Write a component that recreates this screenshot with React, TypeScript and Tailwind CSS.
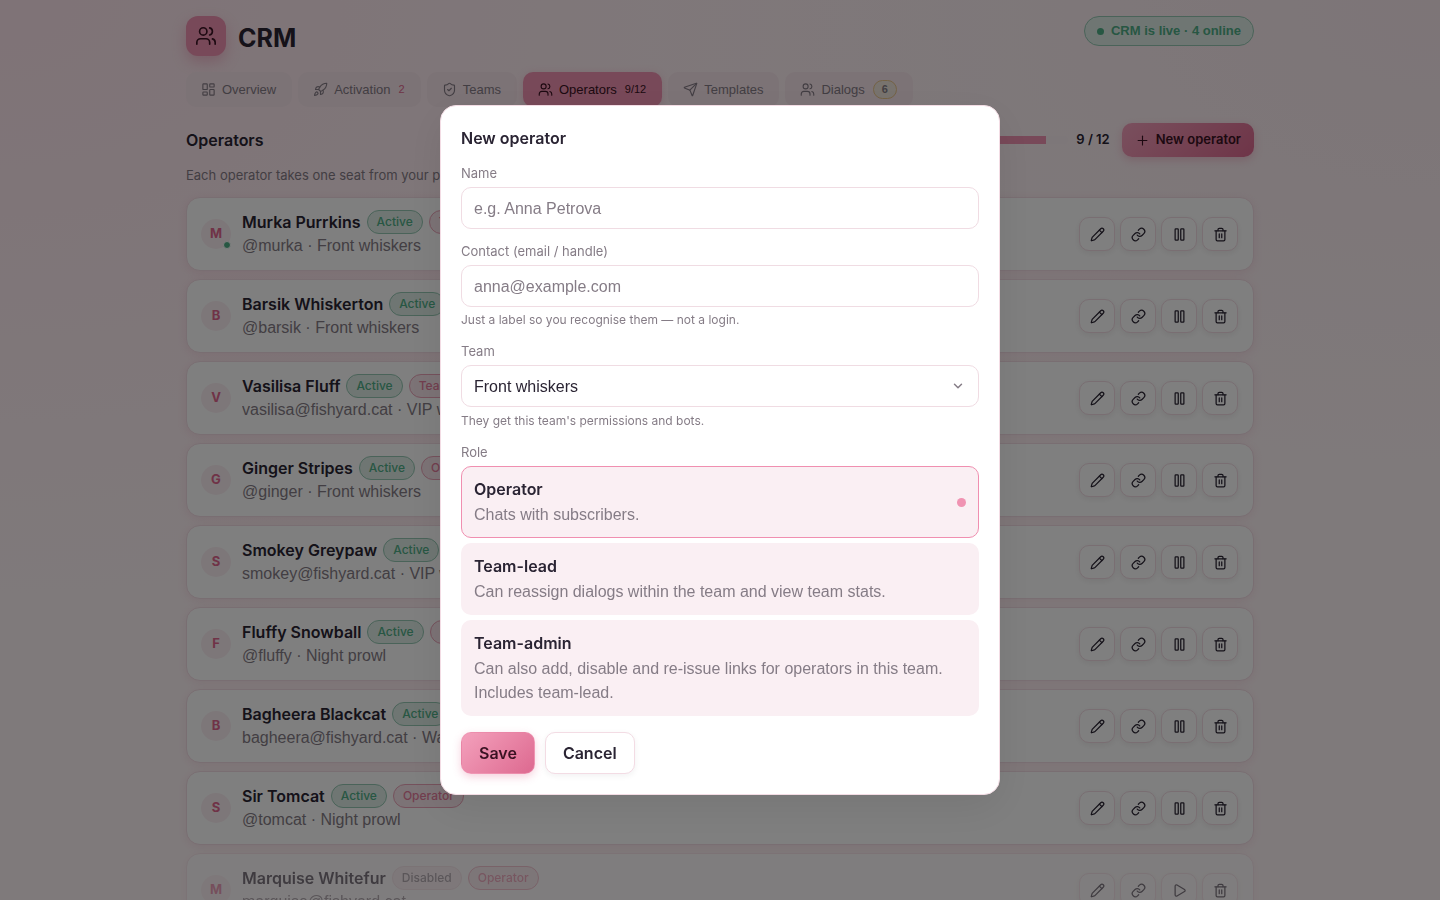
import React, { useState } from 'react';
import {
  ChevronDown,
  LayoutDashboard,
  Link,
  Pause,
  Pencil,
  Play,
  Plus,
  Rocket,
  Send,
  ShieldCheck,
  Trash2,
  Users,
} from 'lucide-react';
import type { LucideIcon } from 'lucide-react';

interface Operator {
  name: string;
  contact: string;
  team: string;
  role: string;
  online?: boolean;
  disabled?: boolean;
}

interface Tab {
  label: string;
  icon: LucideIcon;
  count?: string;
  badge?: string;
  active?: boolean;
}

const tabs: Tab[] = [
  { label: 'Overview', icon: LayoutDashboard },
  { label: 'Activation', icon: Rocket, count: '2' },
  { label: 'Teams', icon: ShieldCheck },
  { label: 'Operators', icon: Users, count: '9/12', active: true },
  { label: 'Templates', icon: Send },
  { label: 'Dialogs', icon: Users, badge: '6' },
];

const operators: Operator[] = [
  { name: 'Murka Purrkins', contact: '@murka', team: 'Front whiskers', role: 'Team-lead', online: true },
  { name: 'Barsik Whiskerton', contact: '@barsik', team: 'Front whiskers', role: 'Operator' },
  { name: 'Vasilisa Fluff', contact: 'vasilisa@fishyard.cat', team: 'VIP whiskers', role: 'Team-admin' },
  { name: 'Ginger Stripes', contact: '@ginger', team: 'Front whiskers', role: 'Operator' },
  { name: 'Smokey Greypaw', contact: 'smokey@fishyard.cat', team: 'VIP whiskers', role: 'Operator' },
  { name: 'Fluffy Snowball', contact: '@fluffy', team: 'Night prowl', role: 'Operator' },
  { name: 'Bagheera Blackcat', contact: 'bagheera@fishyard.cat', team: 'Warehouse', role: 'Operator' },
  { name: 'Sir Tomcat', contact: '@tomcat', team: 'Night prowl', role: 'Operator' },
  { name: 'Marquise Whitefur', contact: 'marquise@fishyard.cat', team: '', role: 'Operator', disabled: true },
];

const roles = [
  { id: 'operator', title: 'Operator', text: 'Chats with subscribers.' },
  { id: 'lead', title: 'Team-lead', text: 'Can reassign dialogs within the team and view team stats.' },
  {
    id: 'admin',
    title: 'Team-admin',
    text: 'Can also add, disable and re-issue links for operators in this team. Includes team-lead.',
  },
];

const badgeBase = 'flex h-6 items-center rounded-full border px-[9px] text-xs font-medium';

const inputBase =
  "h-[42px] rounded-[10px] border border-[#f0dce3] bg-white px-3 pt-0.5 font-['Liberation_Sans',sans-serif] placeholder:text-[#857c86]";

const IconButton: React.FC<{ label: string; icon: LucideIcon }> = ({ label, icon: Icon }) => (
  <button
    aria-label={label}
    className="flex h-[34px] w-9 items-center justify-center rounded-[10px] border border-[#f3dce4] bg-white text-[#2a2433] shadow-[0_2px_6px_rgba(40,20,30,0.08)]"
  >
    <Icon size={15} strokeWidth={2} />
  </button>
);

const OperatorRow: React.FC<{ operator: Operator }> = ({ operator }) => (
  <li
    className={`flex h-[74px] shrink-0 items-center gap-[11px] rounded-[14px] border border-[#f3dce4] bg-white pr-[15px] pl-3.5 shadow-[0_2px_10px_rgba(200,90,130,0.12)] ${
      operator.disabled ? 'opacity-60' : ''
    }`}
  >
    <div className="relative flex size-[30px] shrink-0 items-center justify-center rounded-full bg-[#fbeff3] text-[13px] font-bold text-[#e0668f]">
      {operator.name[0]}
      {operator.online && (
        <span className="absolute right-0 bottom-0 size-2 rounded-full border border-white bg-[#4fae86]" />
      )}
    </div>
    <div className="min-w-0 flex-1">
      <div className="flex h-6 items-center gap-1.5">
        <span className="font-semibold">{operator.name}</span>
        {operator.disabled ? (
          <span className={`${badgeBase} border-[#f0dce3] bg-[#fbeff3] text-[#857c86]`}>Disabled</span>
        ) : (
          <span className={`${badgeBase} border-[#94c7b2] bg-[#dfede7] text-[#4fae86]`}>Active</span>
        )}
        <span className={`${badgeBase} border-[#eba3b8] bg-[#f8e6ec] text-[#e57c9c]`}>
          {operator.role}
        </span>
      </div>
      <p className="truncate font-['Liberation_Sans',sans-serif] leading-6 text-[#857c86]">
        {operator.contact}
        {operator.team && ` · ${operator.team}`}
      </p>
    </div>
    <div className="flex gap-[5px]">
      <IconButton label="Edit" icon={Pencil} />
      <IconButton label="Copy link" icon={Link} />
      <IconButton
        label={operator.disabled ? 'Enable' : 'Pause'}
        icon={operator.disabled ? Play : Pause}
      />
      <IconButton label="Delete" icon={Trash2} />
    </div>
  </li>
);

const NewOperatorDialog: React.FC = () => {
  const [role, setRole] = useState('operator');

  return (
    <div className="fixed inset-0 z-50 flex items-center justify-center bg-black/50">
      <form
        role="dialog"
        aria-labelledby="dialog-title"
        onSubmit={(event) => event.preventDefault()}
        className="w-full max-w-[560px] rounded-2xl border border-[#f3dce4] bg-white p-5 shadow-[0_12px_40px_rgba(0,0,0,0.08)]"
      >
        <h2 id="dialog-title" className="mb-[13px] leading-6 font-semibold">
          New operator
        </h2>

        <div className="mb-3 flex flex-col gap-1">
          <label htmlFor="name" className="text-[13px] leading-5 text-[#857c86]">
            Name
          </label>
          <input id="name" placeholder="e.g. Anna Petrova" className={inputBase} />
        </div>

        <div className="mb-3 flex flex-col gap-1">
          <label htmlFor="contact" className="text-[13px] leading-5 text-[#857c86]">
            Contact (email / handle)
          </label>
          <input id="contact" placeholder="anna@example.com" className={inputBase} />
          <p className="text-xs leading-[18px] text-[#857c86]">
            Just a label so you recognise them — not a login.
          </p>
        </div>

        <div className="mb-3 flex flex-col gap-1">
          <label htmlFor="team" className="text-[13px] leading-5 text-[#857c86]">
            Team
          </label>
          <div className="relative">
            <select id="team" className={`${inputBase} block w-full appearance-none`}>
              <option>Front whiskers</option>
              <option>Night prowl</option>
            </select>
            <ChevronDown
              size={14}
              strokeWidth={2.5}
              className="pointer-events-none absolute top-[14px] right-3.5 text-[#857c86]"
            />
          </div>
          <p className="pt-px text-xs leading-[18px] text-[#857c86]">
            They get this team's permissions and bots.
          </p>
        </div>

        <fieldset>
          <legend className="mb-1 text-[13px] leading-5 text-[#857c86]">Role</legend>
          <div className="flex flex-col gap-[5px]">
            {roles.map((item) => (
              <label
                key={item.id}
                className={`flex items-center justify-between gap-3 rounded-[10px] border bg-[#faeff3] px-3 py-2.5 ${
                  role === item.id ? 'border-[#f08fb0]' : 'border-transparent'
                }`}
              >
                <input
                  type="radio"
                  name="role"
                  className="sr-only"
                  checked={role === item.id}
                  onChange={() => setRole(item.id)}
                />
                <span className="flex flex-col gap-0.5 leading-6">
                  <span className="font-semibold">{item.title}</span>
                  <span className="font-['Liberation_Sans',sans-serif] text-[#857c86]">{item.text}</span>
                </span>
                {role === item.id && <span className="size-[9px] shrink-0 rounded-full bg-[#f093b2]" />}
              </label>
            ))}
          </div>
        </fieldset>

        <div className="mt-4 flex gap-2.5">
          <button className="h-[42px] rounded-[10px] border border-[#f093b2]/50 bg-linear-135 from-[#f3a0bc] to-[#dd6990] px-[17px] font-semibold text-[#3a1222] shadow-[0_3px_8px_rgba(224,102,143,0.3)]">
            Save
          </button>
          <button
            type="button"
            className="h-[42px] rounded-[10px] border border-[#f3dce4] bg-white px-[17px] font-semibold shadow-[0_2px_6px_rgba(40,20,30,0.06)]"
          >
            Cancel
          </button>
        </div>
      </form>
    </div>
  );
};

const App: React.FC = () => (
  <div className="h-screen overflow-hidden bg-[#fff5f7] bg-[radial-gradient(ellipse_at_top_left,#fee6ee_0%,transparent_50%),radial-gradient(ellipse_at_top_right,#faeaef_0%,transparent_40%)] font-['Inter',sans-serif] text-base text-[#2a2433]">
    <div className="mx-auto flex max-w-[1100px] flex-col px-4 pt-4">
      <header className="flex items-start justify-between">
        <div className="flex items-end gap-3">
          <div className="flex size-10 items-center justify-center rounded-xl bg-[#f093b2] text-[#3a1222] shadow-[0_6px_14px_rgba(224,102,143,0.35)]">
            <Users size={22} strokeWidth={1.8} />
          </div>
          <h1 className="text-[25px] leading-9 font-bold">CRM</h1>
        </div>
        <div className="flex h-[30px] items-center gap-[7px] rounded-full border border-[#94c7b2] bg-[#dfede7] px-3 font-['Liberation_Sans',sans-serif] text-[13px] font-bold text-[#4fae86]">
          <span className="size-[7px] rounded-full bg-[#4fae86]" />
          CRM is live · 4 online
        </div>
      </header>

      <nav className="mt-4 flex gap-1.5 font-['Liberation_Sans',sans-serif]">
        {tabs.map(({ label, icon: Icon, count, badge, active }) => (
          <button
            key={label}
            className={`flex h-[35px] items-center gap-1.5 rounded-[10px] pr-4 pl-[15px] text-[13px] ${
              active
                ? 'bg-[#f093b2] text-[#3a1222] shadow-[0_2px_8px_rgba(224,102,143,0.25)]'
                : 'bg-[#f9e6ec] text-[#857c86]'
            }`}
          >
            <Icon size={15} strokeWidth={1.8} />
            {label}
            {count && (
              <span className={`ml-0.5 text-[11px] ${active ? '' : 'text-[#e0668f]'}`}>{count}</span>
            )}
            {badge && (
              <span className="ml-0.5 flex h-[19px] items-center rounded-full border border-[#e8c48a] bg-[#f0e7dc] px-2 text-[11px] font-bold">
                {badge}
              </span>
            )}
          </button>
        ))}
      </nav>

      <div className="mt-4 flex h-[34px] items-center">
        <h2 className="flex-1 font-semibold">Operators</h2>
        <div className="h-2 w-22 overflow-hidden rounded-full bg-[#faeff3]">
          <div className="h-full bg-[#f093b2]" style={{ width: `${(9 / 12) * 100}%` }} />
        </div>
        <span className="mr-3 ml-2 text-[13px] font-semibold">9 / 12</span>
        <button className="flex h-[34px] items-center gap-1.5 rounded-[10px] bg-linear-135 from-[#f3a0bc] to-[#dd6990] px-[13px] text-[13px] font-semibold text-[#3a1222] shadow-[0_3px_8px_rgba(224,102,143,0.3)]">
          <Plus size={15} strokeWidth={1.8} />
          New operator
        </button>
      </div>
      <p className="mt-2 text-[13px] leading-5 text-[#857c86]">
        Each operator takes one seat from your plan.
      </p>

      <ul className="mt-3 flex flex-col gap-2">
        {operators.map((operator) => (
          <OperatorRow key={operator.name} operator={operator} />
        ))}
      </ul>
    </div>
    <NewOperatorDialog />
  </div>
);

export default App;
